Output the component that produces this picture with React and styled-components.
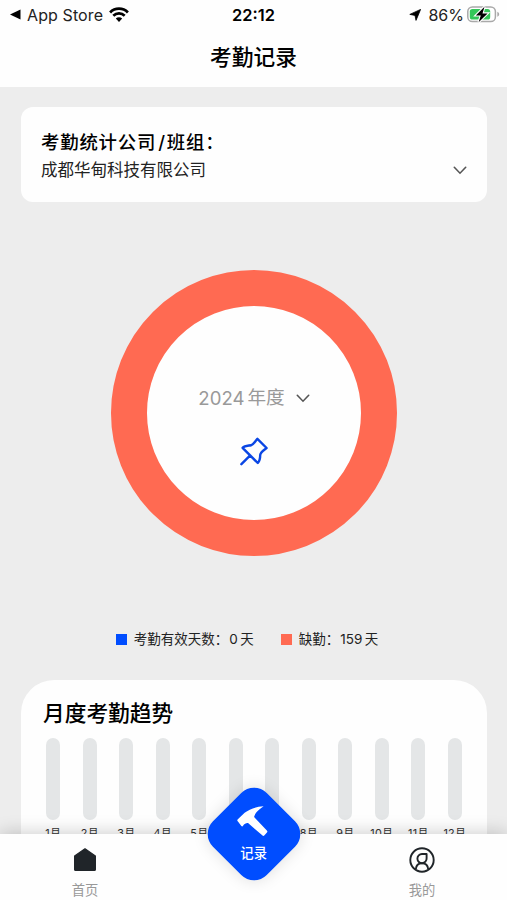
import { useState } from "react";
import styled, { createGlobalStyle } from "styled-components";

const months = [1, 2, 3, 4, 5, 6, 7, 8, 9, 10, 11, 12];

function Chevron() {
  return (
    <svg width="14" height="9" viewBox="0 0 14 9" fill="none">
      <path
        d="M1.3 1.3 7 7.2l5.7-5.9"
        stroke="#555"
        strokeWidth="1.6"
        strokeLinecap="round"
      />
    </svg>
  );
}

function StatusBar() {
  return (
    <Status>
      <StatusLeft>
        <svg width="11" height="11" viewBox="0 0 11 11">
          <path d="M0 5.5 10.5.4v10.2z" />
        </svg>
        <span>App Store</span>
        <svg width="20" height="15" viewBox="0 0 20 15" fill="none">
          <path d="M1.1 5.4a12.600 12.600 0 0 1 17.800 0" stroke="#000" strokeWidth="2.8" />
          <path d="M4.3 8.800a8.100 8.100 0 0 1 11.400 0" stroke="#000" strokeWidth="2.700" />
          <path d="M6.800 11.600a4.600 4.600 0 0 1 6.400 0L10 14.900z" fill="#000" />
        </svg>
      </StatusLeft>
      <Clock>22:12</Clock>
      <StatusRight>
        <svg width="12" height="12" viewBox="0 0 12 12">
          <path d="M11.6.4 7 11.4 6 6.400.800 5.400z" stroke="#000" strokeWidth=".8" strokeLinejoin="round" />
        </svg>
        <span>86%</span>
        <svg width="33" height="17" viewBox="0 0 33 17">
          <rect x=".8" y="1" width="27.6" height="14.6" rx="4.6" fill="#fff" stroke="#a9a9a9" strokeWidth="1.5" />
          <rect x="2.8" y="3" width="20.4" height="10.6" rx="2.6" fill="#34c759" />
          <path d="M30.3 5.8v5c1.2-.5 1.9-1.4 1.9-2.5s-.7-2-1.9-2.5z" fill="#a9a9a9" />
          <path
            d="M17.5.7 8.8 9.5h5L11.6 16.2l9-8.8h-5.1z"
            stroke="#fff"
            strokeWidth="2.2"
            paintOrder="stroke"
          />
        </svg>
      </StatusRight>
    </Status>
  );
}

function App() {
  const [tab, setTab] = useState("record");

  return (
    <Screen>
      <GlobalStyle />
      <Header>
        <StatusBar />
        <Title>考勤记录</Title>
      </Header>

      <Content>
        <CompanyCard>
          <h2>
            考勤统计公司<Slash>/</Slash>班组：
          </h2>
          <CompanyRow>
            <span>成都华甸科技有限公司</span>
            <Chevron />
          </CompanyRow>
        </CompanyCard>

        <Ring>
          <YearPicker>
            <Year>2024</Year>
            <YearUnit>年度</YearUnit>
            <Chevron />
          </YearPicker>
          <svg width="28" height="29" viewBox="0 0 28 29" fill="none">
            <path
              d="M17.4 1.8 26.6 11C24 13 20.4 14.800 20.200 18 20.200 21 19.600 24.200 17.800 26L2.600 10.800C4.600 8.600 8 8.800 11 8.300 13.400 7.700 15.200 4.200 17.400 1.800zM10.200 18.400 1.400 27.200"
              stroke="#0a46e4"
              strokeWidth="2.4"
              strokeLinecap="round"
              strokeLinejoin="round"
            />
          </svg>
        </Ring>

        <Legend>
          <LegendItem $color="#004dff">考勤有效天数：<b>0</b>天</LegendItem>
          <LegendItem $color="#ff6a52">缺勤：<b>159</b>天</LegendItem>
        </Legend>

        <TrendCard>
          <h2>月度考勤趋势</h2>
          <Chart>
            {months.map(month => (
              <Month key={month}>
                <Bar />
                <span>{month}月</span>
              </Month>
            ))}
          </Chart>
        </TrendCard>
      </Content>

      <TabBar>
        <Tab onClick={() => setTab("home")}>
          <svg width="24" height="25" viewBox="0 0 24 25">
            <path
              d="M12 1.8 22.4 9v13.4c0 .7-.5 1.1-1.1 1.1H2.7c-.6 0-1.1-.4-1.1-1.1V9z"
              fill="#202529"
              stroke="#202529"
              strokeWidth="1.2"
              strokeLinejoin="round"
            />
          </svg>
          <span>首页</span>
        </Tab>
        <Tab onClick={() => setTab("mine")}>
          <svg width="26" height="26" viewBox="0 0 26 26" fill="none" stroke="#202529" strokeWidth="1.9">
            <circle cx="13" cy="13" r="11.7" />
            <path d="M17.600 7v4.300a4.600 4.600 0 1 1-4.600-4.300z" strokeLinejoin="round" />
            <path d="M6.800 22.300c.3-3.800 2.700-6 6.200-6s5.900 2.200 6.200 6" />
          </svg>
          <span>我的</span>
        </Tab>
        <RecordButton aria-pressed={tab === "record"} onClick={() => setTab("record")}>
          <RecordFace>
            <svg width="32" height="31" viewBox="0 0 32 31" fill="#fff">
              <path d="M27 .5C19 .9 12.800 3.200 8 7L1.200 13.500c-.7.700-.7 1.300-.1 2l3.600 4.600c.6.700 1.200.6 1.700-.1 1.300-2 3-3 5-2.800L25.600 29.500c.7.700 1.400.7 2 .1l2.700-2.900c.6-.7.6-1.300-.1-2L17.400 11.200C18.400 6.800 22.200 3.800 27 .5z" />
            </svg>
            <span>记录</span>
          </RecordFace>
        </RecordButton>
      </TabBar>
    </Screen>
  );
}

export default App;

const GlobalStyle = createGlobalStyle`
  * {
    box-sizing: border-box;
  }

  body {
    margin: 0;
    font-family: Inter, "Noto Sans CJK SC", sans-serif;
  }

  h1, h2 {
    margin: 0;
  }

  svg {
    display: block;
    flex-shrink: 0;
  }

  button {
    border: none;
    padding: 0;
    background: none;
    font-family: inherit;
  }
`;

const Screen = styled.div`
  display: flex;
  flex-direction: column;
  width: 507px;
  height: 900px;
  overflow: hidden;
  background-color: #ededed;
`;

const Header = styled.header`
  height: 87px;
  flex-shrink: 0;
  background-color: #fefefe;
`;

const Status = styled.div`
  display: grid;
  grid-template-columns: 1fr auto 1fr;
  align-items: center;
  height: 29px;
  padding: 0 7px 0 10px;
  font-size: 16px;
  color: #222;
`;

const StatusLeft = styled.div`
  display: flex;
  align-items: center;

  > span {
    margin: 1px 6px 0 6px;
    letter-spacing: 0.1px;
  }
`;

const StatusRight = styled.div`
  display: flex;
  align-items: center;
  justify-content: flex-end;

  > span {
    margin: 1px 3px 0 7px;
  }
`;

const Clock = styled.div`
  color: #000;
  font-size: 16.4px;
  font-weight: 600;
  padding: 1px 3px 0 0;
`;

const Title = styled.h1`
  text-align: center;
  font-size: 21.7px;
  font-weight: 500;
  line-height: 57px;
  color: #000;
`;

const Content = styled.main`
  flex: 1;
  min-height: 0;
  overflow: hidden;
  padding: 20px 20px 0 21px;
`;

const CompanyCard = styled.section`
  height: 95px;
  border-radius: 12px;
  background-color: #fefefe;
  padding: 21px 20px 0 20px;

  > h2 {
    font-size: 18.4px;
    font-weight: 500;
    line-height: 28px;
    letter-spacing: 0.8px;
    color: #000;
  }
`;

const Slash = styled.span`
  margin: 0 1px 0 2px;
`;

const CompanyRow = styled.div`
  display: flex;
  align-items: center;
  justify-content: space-between;
  font-size: 16.5px;
  line-height: 29px;
  color: #222;
`;

const Ring = styled.div`
  display: flex;
  flex-direction: column;
  align-items: center;
  width: 286px;
  height: 286px;
  margin: 68px auto 0;
  border: 36px solid #ff6a52;
  border-radius: 50%;
  background-color: #fefefe;
  padding-top: 78px;

  > svg {
    margin-top: 25px;
  }
`;

const YearPicker = styled.div`
  display: flex;
  align-items: center;
  height: 28px;
  font-size: 18.6px;
  line-height: 28px;
  color: #999;

  > svg {
    margin-left: 11px;
  }
`;

const Year = styled.span`
  margin-right: 3px;
`;

const YearUnit = styled.span`
  margin-top: -3px;
`;

const Legend = styled.div`
  display: flex;
  justify-content: center;
  gap: 27px;
  margin-top: 73px;
  padding-right: 14px;
`;

const LegendItem = styled.div`
  display: flex;
  align-items: center;
  font-size: 13.5px;
  line-height: 20px;
  color: #222;

  &::before {
    content: "";
    width: 11px;
    height: 11px;
    margin-right: 7px;
    background-color: ${props => props.$color};
  }

  > b {
    font-weight: 400;
    margin: 0 2.5px 0 1px;
  }
`;

const TrendCard = styled.section`
  height: 240px;
  margin-top: 31px;
  border-radius: 33px;
  background-color: #fefefe;
  padding: 17px 14px 0;

  > h2 {
    margin-left: 8px;
    font-size: 21.7px;
    font-weight: 500;
    line-height: 32px;
    color: #000;
  }
`;

const Chart = styled.div`
  display: grid;
  grid-template-columns: repeat(12, 1fr);
  margin-top: 9px;
`;

const Month = styled.div`
  display: flex;
  flex-direction: column;
  align-items: center;
  font-size: 10.8px;
  line-height: 16px;
  letter-spacing: 0.3px;
  color: #333;

  > span {
    margin-top: 6px;
  }
`;

const Bar = styled.div`
  width: 14px;
  height: 82px;
  border-radius: 7px;
  background-color: #e4e6e7;
`;

const TabBar = styled.nav`
  position: relative;
  display: flex;
  justify-content: space-between;
  height: 66px;
  flex-shrink: 0;
  padding: 0 45px;
  background-color: #fefefe;
  box-shadow: 0 -2px 16px rgba(0, 0, 0, 0.18);
`;

const Tab = styled.button`
  display: flex;
  flex-direction: column;
  align-items: center;
  justify-content: space-between;
  width: 80px;
  height: 66px;
  padding-top: 13px;
  font-size: 13.3px;
  line-height: 20px;
  color: #999;
`;

/* sits over the middle of the tab bar, half above its edge */
const RecordButton = styled.button`
  position: absolute;
  left: 216px;
  top: -38px;
  width: 76px;
  height: 76px;
  border-radius: 18px;
  background-color: #004dff;
  transform: rotate(45deg);
  box-shadow: 0 0 16px rgba(0, 0, 0, 0.13);
`;

const RecordFace = styled.div`
  display: flex;
  flex-direction: column;
  align-items: center;
  transform: rotate(-45deg);
  font-size: 13.3px;
  font-weight: 500;
  line-height: 20px;
  color: #fff;

  > svg {
    margin-right: 2px;
  }

  > span {
    margin-top: 6px;
  }
`;
